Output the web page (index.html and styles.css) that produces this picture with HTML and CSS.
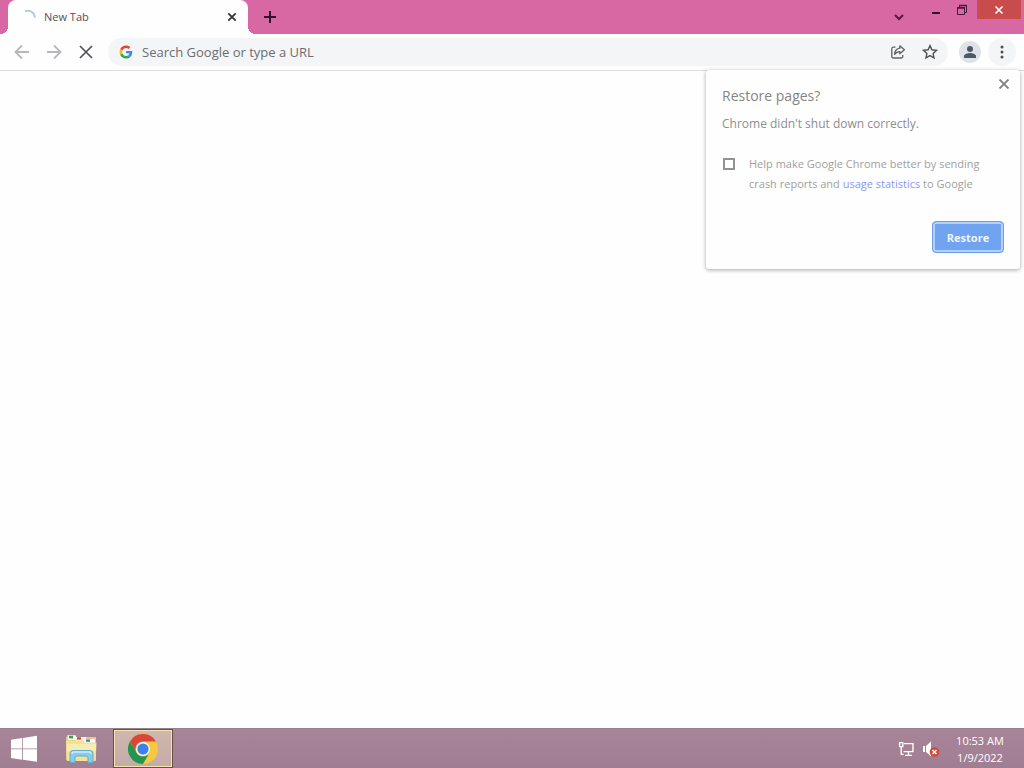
FILE: index.html
```html
<!DOCTYPE html>
<html lang="en">
<head>
  <meta charset="UTF-8" />
  <meta name="viewport" content="width=device-width, initial-scale=1.0"/>
  <title>New Tab</title>
  <link rel="stylesheet" href="styles.css">
</head>
<body>
  <header class="tab-strip">
    <div class="tab">
      <svg class="tab-spinner" width="16" height="16" viewBox="0 0 16 16"><path d="M5 2.200A7 7 0 0 1 14.800 8.500" fill="none" stroke="#b3c6d8" stroke-width="1.800"/></svg>
      <span class="tab-title">New Tab</span>
      <button type="button" class="tab-close" aria-label="Close tab">
        <svg width="16" height="16" viewBox="0 0 16 16"><path d="M4.300 4.300l7.400 7.400M11.700 4.300l-7.400 7.400" stroke="#35363a" stroke-width="1.800"/></svg>
      </button>
    </div>
    <button type="button" class="new-tab" aria-label="New tab">
      <svg width="16" height="16" viewBox="0 0 16 16"><path d="M8 2v12M2 8h12" stroke="#2f1030" stroke-width="2"/></svg>
    </button>
    <div class="window-controls">
      <button type="button" class="tab-search" aria-label="Search tabs">
        <svg width="16" height="16" viewBox="0 0 16 16"><path d="M4 6l4 4 4-4" fill="none" stroke="#5a1747" stroke-width="2"/></svg>
      </button>
      <button type="button" class="window-button" aria-label="Minimize">
        <svg width="12" height="12" viewBox="0 0 12 12"><path d="M2 9h8" stroke="#2f1030" stroke-width="2"/></svg>
      </button>
      <button type="button" class="window-button" aria-label="Restore window">
        <svg width="12" height="12" viewBox="0 0 12 12" fill="none" stroke="#4a1740"><path d="M3.500 3V1.500h7v7H9"/><path d="M1.500 3.500h7v7h-7z"/><path d="M3 1.500h8M1 4h8" stroke-width="1.400"/></svg>
      </button>
      <button type="button" class="window-button window-close" aria-label="Close window">
        <svg width="12" height="12" viewBox="0 0 12 12"><path d="M2.500 2.500l7 7M9.500 2.500l-7 7" stroke="#fff" stroke-width="1.600"/></svg>
      </button>
    </div>
  </header>

  <nav class="toolbar">
    <button type="button" class="nav-button" aria-label="Back" disabled>
      <svg width="16" height="16" viewBox="0 0 16 16"><path d="M15 8H2M8 1.500L1.500 8 8 14.500" fill="none" stroke="#b6b8bb" stroke-width="1.800"/></svg>
    </button>
    <button type="button" class="nav-button" aria-label="Forward" disabled>
      <svg width="16" height="16" viewBox="0 0 16 16"><path d="M1 8h13M8 1.500L14.500 8 8 14.500" fill="none" stroke="#b6b8bb" stroke-width="1.800"/></svg>
    </button>
    <button type="button" class="nav-button" aria-label="Stop loading">
      <svg width="16" height="16" viewBox="0 0 16 16"><path d="M2 2l12 12M14 2L2 14" stroke="#505358" stroke-width="1.700"/></svg>
    </button>
    <div class="omnibox">
      <svg width="14" height="14" viewBox="-2 -2 52 52">
        <path fill="#EA4335" d="M24 9.5c3.54 0 6.71 1.22 9.21 3.6l6.85-6.85C35.9 2.38 30.47 0 24 0 14.62 0 6.51 5.38 2.56 13.22l7.98 6.19C12.43 13.72 17.74 9.5 24 9.5z"/>
        <path fill="#4285F4" d="M46.98 24.55c0-1.57-.15-3.09-.38-4.55H24v9.02h12.94c-.58 2.96-2.26 5.48-4.78 7.18l7.73 6c4.51-4.18 7.09-10.36 7.09-17.65z"/>
        <path fill="#FBBC05" d="M10.53 28.59c-.48-1.45-.76-2.99-.76-4.59s.27-3.14.76-4.59l-7.98-6.19C.92 16.46 0 20.12 0 24s.92 7.54 2.56 10.78l7.97-6.19z"/>
        <path fill="#34A853" d="M24 48c6.48 0 11.93-2.13 15.89-5.81l-7.73-6c-2.15 1.45-4.92 2.3-8.16 2.3-6.26 0-11.57-4.22-13.47-9.91l-7.98 6.19C6.51 42.62 14.62 48 24 48z"/>
      </svg>
      <input type="text" class="omnibox-input" aria-label="Address" placeholder="Search Google or type a URL" />
      <button type="button" class="omnibox-button" aria-label="Share this page">
        <svg width="16" height="16" viewBox="0 0 16 16" fill="none" stroke="#5f6368" stroke-width="1.3" stroke-linejoin="round"><path d="M5.500 3.200H3.200A1.400 1.400 0 0 0 1.800 4.600v8A1.400 1.400 0 0 0 3.200 14h8.200a1.400 1.400 0 0 0 1.400-1.400V11"/><path d="M9.800 1.800l4.600 4-4.600 4V7.600C7.400 7.600 5.800 8.600 4.600 10.400 4.900 7 6.600 4.600 9.800 4.200z"/></svg>
      </button>
      <button type="button" class="omnibox-button" aria-label="Bookmark this tab">
        <svg width="16" height="16" viewBox="0 0 16 16"><path d="M8 1.600l1.900 4.200 4.600.5-3.400 3.100.9 4.500L8 11.600l-4 2.300.9-4.500L1.500 6.300l4.600-.5z" fill="none" stroke="#505358" stroke-width="1.400"/></svg>
      </button>
    </div>
    <button type="button" class="profile-button" aria-label="Profile">
      <svg width="14" height="14" viewBox="0 0 14 14" fill="#4a5a6a"><circle cx="7" cy="4" r="3"/><path d="M1 13v-2c0-2.100 4-3 6-3s6 .9 6 3v2z"/></svg>
    </button>
    <button type="button" class="menu-button" aria-label="Menu">
      <svg width="16" height="16" viewBox="0 0 16 16" fill="#4d5055"><circle cx="8" cy="3" r="1.500"/><circle cx="8" cy="8" r="1.500"/><circle cx="8" cy="13" r="1.500"/></svg>
    </button>

    <section class="restore-bubble">
      <button type="button" class="bubble-close" aria-label="Close">
        <svg width="16" height="16" viewBox="0 0 16 16"><path d="M3.500 3.500l9 9M12.500 3.500l-9 9" stroke="#858585" stroke-width="1.800"/></svg>
      </button>
      <h1 class="bubble-title">Restore pages?</h1>
      <p class="bubble-message">Chrome didn't shut down correctly.</p>
      <div class="bubble-option">
        <input type="checkbox" id="crashReports" />
        <label for="crashReports">Help make Google Chrome better by sending<br>crash reports and <a href="#">usage statistics</a> to Google</label>
      </div>
      <button type="button" class="restore-button">Restore</button>
    </section>
  </nav>

  <main class="page"></main>

  <footer class="taskbar">
    <button type="button" class="task-button" aria-label="Start">
      <svg width="28" height="28" viewBox="0 0 28 28" fill="#fff"><path d="M1 4.800L12 3v10.400H1zM12.800 2.900L27 .8v12.600H12.800zM1 14.200h11v10.500L1 23zM12.800 14.200H27v12.600l-14.200-2z"/></svg>
    </button>
    <button type="button" class="task-button task-explorer" aria-label="File Explorer">
      <svg width="34" height="30" viewBox="0 0 34 30">
        <path d="M1 3.500L2.500 1H10l1.500 2H31v23H1z" fill="#e3cc7e"/>
        <path d="M3 1.500h8V6H3z" fill="#f7fbf0"/>
        <path d="M4 1.800h4v2.600H4z" fill="#34a24a"/>
        <path d="M11 3h10v4H11z" fill="#fff5e2"/>
        <path d="M12 3.200h4v2.400h-4z" fill="#dd4a2b"/>
        <path d="M19 5h11v4H19z" fill="#f6fbff"/>
        <path d="M21 5.400h4v2.400h-4z" fill="#3e82c4"/>
        <path d="M1 6.500h16l2 2h12.500l-.8 18.500H2z" fill="#f3e196"/>
        <path d="M2 10h29v7H2z" fill="#f9ecb0"/>
        <path d="M5 28V19.500q0-3 3-3h17q3 0 3 3V28l-5 1v-5q0-2-2-2h-9q-2 0-2 2v5z" fill="#8acbe9" stroke="#62add2"/>
        <path d="M7 20q0-2 2-2h15q2 0 2 2" fill="none" stroke="#cceefa" stroke-width="1.600"/>
      </svg>
    </button>
    <button type="button" class="task-button task-active" aria-label="Google Chrome">
      <svg width="30" height="30" viewBox="0 0 30 30">
        <circle cx="15" cy="15" r="15" fill="#f7c83d"/>
        <path d="M2 7.500A15 15 0 0 1 28 7.500H15A7.500 7.500 0 0 0 8.500 18.750z" fill="#dc4638"/>
        <path d="M2 7.500A15 15 0 0 0 15 30l6.500-11.250A7.500 7.500 0 0 1 8.500 18.750z" fill="#219653"/>
        <circle cx="15" cy="15" r="7" fill="#f8f8f8"/>
        <circle cx="15" cy="15" r="5.600" fill="#3f80ea"/>
      </svg>
    </button>
    <div class="tray">
      <svg width="16" height="16" viewBox="0 0 16 16" fill="none" stroke="#fff" stroke-width="1.400"><path d="M6 2.600h9v8H5.500M10.500 11v3M7 14.400h7"/><path d="M1.600 1.600h3.200v4H1.600zM3.200 6v8M3.200 13.400h2.500"/></svg>
      <svg width="18" height="16" viewBox="0 0 18 16"><path d="M1 5h2v6H1zM4 5l5-4.500v15L4 11z" fill="#fff"/><circle cx="12.500" cy="11" r="4.800" fill="#d14b3c"/><path d="M10.500 9l4 4M14.500 9l-4 4" stroke="#fff" stroke-width="1.500"/></svg>
      <div class="clock">
        <time>10:53 AM</time>
        <time>1/9/2022</time>
      </div>
    </div>
  </footer>
</body>
</html>
```
FILE: styles.css
```css
* {
  margin: 0;
  padding: 0;
  box-sizing: border-box;
  font-family: 'Open Sans', 'Noto Sans', sans-serif;
}

body {
  background-color: #fefefe;
  display: flex;
  flex-direction: column;
  min-height: 100vh;
}

button {
  display: flex;
  flex-shrink: 0;
  align-items: center;
  justify-content: center;
  border: none;
  background: none;
}

svg {
  display: block;
  flex-shrink: 0;
}

/* tab strip */
.tab-strip {
  display: flex;
  height: 34px;
  padding: 0 3px 0 8px;
  background-color: #d868a3;
}

.tab {
  position: relative;
  display: flex;
  align-items: center;
  gap: 8px;
  width: 240px;
  padding: 0 8px 0 12px;
  border-radius: 8px 8px 0 0;
  background-color: #fefefe;
}

.tab::before,
.tab::after {
  content: '';
  position: absolute;
  bottom: 0;
  width: 8px;
  height: 8px;
}

.tab::before {
  right: 100%;
  background: radial-gradient(circle at 0 0, transparent 8px, #fefefe 8px);
}

.tab::after {
  left: 100%;
  background: radial-gradient(circle at 100% 0, transparent 8px, #fefefe 8px);
}

.tab-title {
  flex: 1;
  font-size: 11px;
  line-height: 16px;
  color: #505257;
}

.new-tab {
  width: 28px;
  margin-left: 8px;
}

.window-controls {
  display: flex;
  align-items: flex-start;
  margin-left: auto;
}

.tab-search {
  width: 28px;
  height: 34px;
  margin-right: 10px;
}

.window-button {
  width: 26px;
  height: 19px;
}

.window-close {
  width: 44px;
  margin-left: 2px;
  background-color: #c94c4c;
}

/* toolbar */
.toolbar {
  position: relative;
  display: flex;
  align-items: center;
  height: 37px;
  padding: 0 8px;
  border-bottom: 1px solid #dcdcdf;
}

.nav-button {
  width: 28px;
  height: 28px;
  margin-right: 4px;
}

.omnibox {
  display: flex;
  flex: 1;
  align-items: center;
  height: 28px;
  margin-left: 4px;
  padding: 0 2px 0 11px;
  border-radius: 14px;
  background-color: #f4f5f7;
}

.omnibox-input {
  flex: 1;
  min-width: 0;
  margin-left: 9px;
  border: none;
  outline: none;
  background: none;
  font-size: 13px;
  line-height: 20px;
}

.omnibox-input::placeholder {
  color: #6a6d71;
}

.omnibox-button {
  width: 32px;
  height: 28px;
}

.profile-button {
  width: 22px;
  height: 22px;
  margin-left: 11px;
  border-radius: 50%;
  background-color: #dfe3e7;
}

.menu-button {
  width: 28px;
  height: 28px;
  margin-left: 7px;
  border-radius: 50%;
  background-color: #f4f5f6;
}

/* restore bubble */
.restore-bubble {
  position: absolute;
  top: 36px;
  right: 4px;
  width: 314px;
  padding: 16px;
  border-radius: 3px;
  background-color: #fefefe;
  box-shadow: 0 1px 4px rgba(0, 0, 0, 0.35);
}

.bubble-close {
  position: absolute;
  top: 6px;
  right: 8px;
}

.bubble-title {
  font-size: 14px;
  font-weight: 400;
  line-height: 20px;
  color: #858585;
}

.bubble-message {
  margin-top: 8px;
  font-size: 12px;
  line-height: 20px;
  color: #8e8e8e;
}

.bubble-option {
  display: flex;
  align-items: flex-start;
  gap: 14px;
  margin: 20px 0 27px;
  padding-left: 1px;
  font-size: 11px;
  line-height: 20px;
  color: #a0a0a0;
}

.bubble-option input {
  appearance: none;
  flex-shrink: 0;
  width: 12px;
  height: 12px;
  margin-top: 4px;
  border: 2px solid #929292;
}

.bubble-option a {
  color: #8b98f0;
  text-decoration: none;
}

.restore-button {
  width: 72px;
  height: 32px;
  margin-left: auto;
  border: 1px solid #6a9fec;
  border-radius: 4px;
  background-color: #70a4f1;
  box-shadow: inset 0 0 0 2px #b5d0f8;
  font-size: 11px;
  font-weight: 700;
  color: #edf4fe;
}

.page {
  flex: 1;
}

/* taskbar */
.taskbar {
  display: flex;
  height: 40px;
  padding-right: 16px;
  border-top: 1px solid #958190;
  background: linear-gradient(#a98499, #a07e92);
}

.task-button {
  width: 48px;
}

.task-explorer {
  width: 65px;
  padding-left: 2px;
}

.task-active {
  width: 60px;
  border: 1px solid #66503f;
  background: linear-gradient(#cfb7ae, #c5aba8);
  box-shadow: inset 0 0 0 1px #f5e3b0;
}

.tray {
  display: flex;
  align-items: center;
  gap: 8px;
  margin-left: auto;
}

.clock {
  display: flex;
  flex-direction: column;
  align-items: center;
  width: 56px;
  margin-left: 4px;
  font-size: 11px;
  line-height: 17px;
  white-space: nowrap;
  color: #fff;
}
```
